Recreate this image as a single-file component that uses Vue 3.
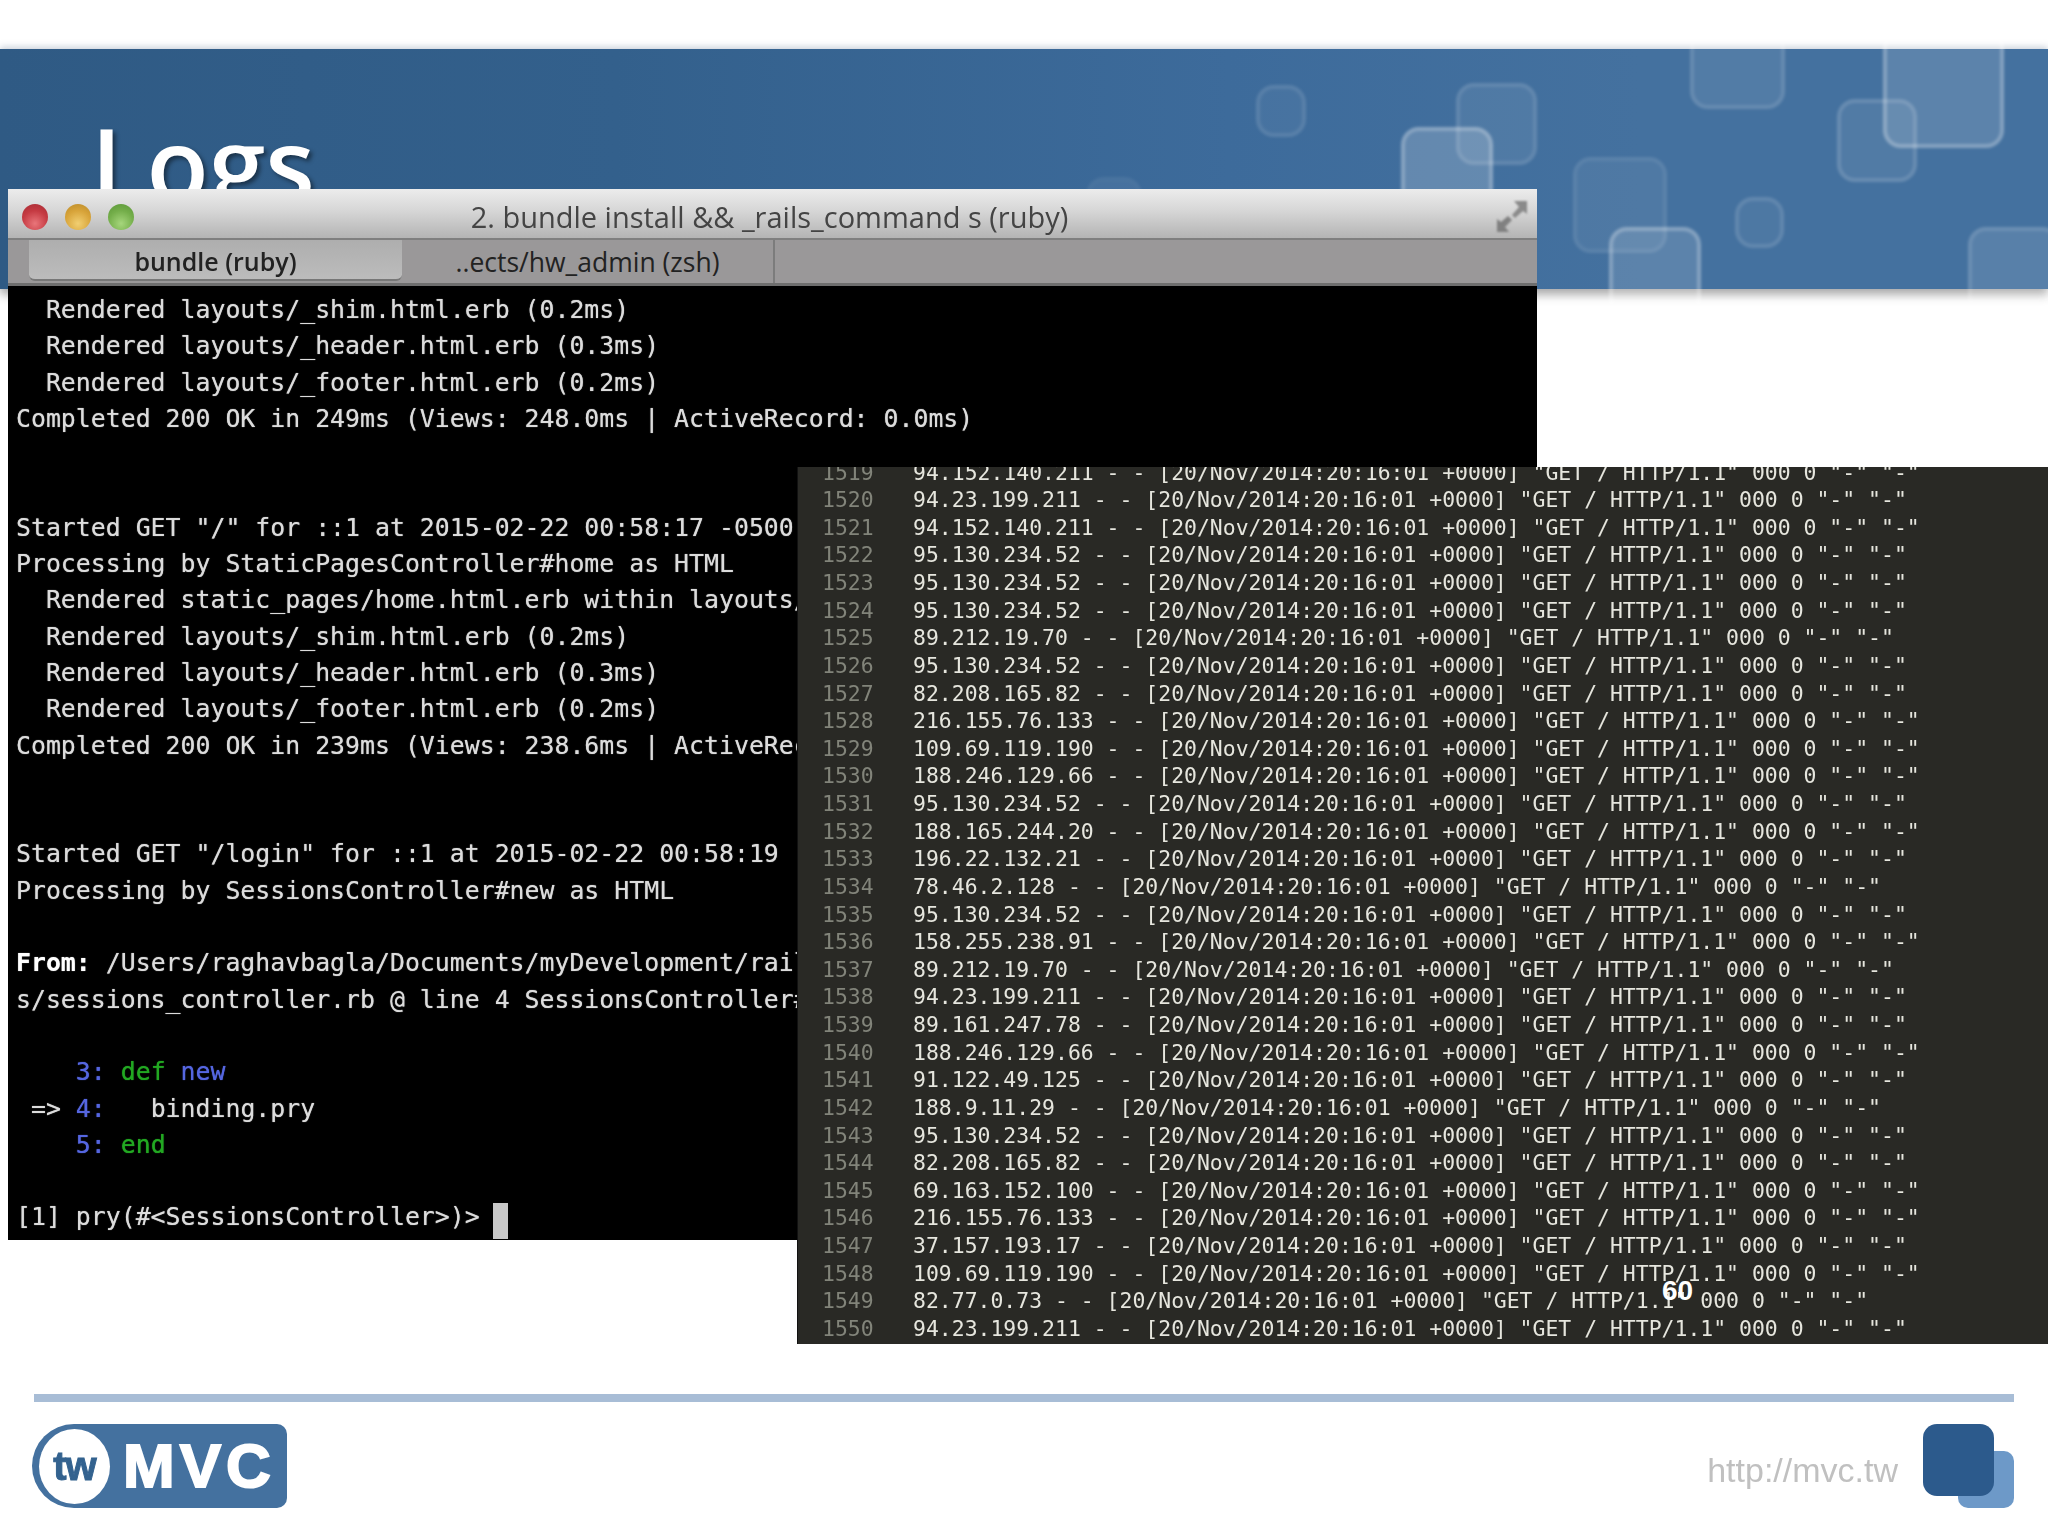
<script setup>
const squares = [
  { x: 1086, y: 177, w: 56, h: 56, a: 0.06, b: 0.02 },
  { x: 1256, y: 85, w: 50, h: 52, a: 0.05, b: 0.1 },
  { x: 1456, y: 83, w: 81, h: 82, a: 0.08, b: 0.11 },
  { x: 1401, y: 127, w: 92, h: 92, a: 0.19, b: 0.24 },
  { x: 1573, y: 157, w: 94, h: 96, a: 0.06, b: 0.08 },
  { x: 1609, y: 227, w: 92, h: 92, a: 0.13, b: 0.26 },
  { x: 1735, y: 197, w: 49, h: 51, a: 0.05, b: 0.12 },
  { x: 1690, y: 14, w: 95, h: 95, a: 0.08, b: 0.12 },
  { x: 1837, y: 99, w: 80, h: 83, a: 0.07, b: 0.14 },
  { x: 1883, y: 28, w: 121, h: 120, a: 0.13, b: 0.26 },
  { x: 1968, y: 227, w: 92, h: 92, a: 0.11, b: 0.12 }
]
const squareStyle = (s) => ({
  left: s.x + 'px',
  top: s.y - 49 + 'px',
  width: s.w + 'px',
  height: s.h + 'px',
  background: `rgba(255,255,255,${s.a})`,
  borderColor: `rgba(255,255,255,${s.b})`
})

const t = (text, c = '') => ({ text, c })
const terminal = [
  [t('  Rendered layouts/_shim.html.erb (0.2ms)')],
  [t('  Rendered layouts/_header.html.erb (0.3ms)')],
  [t('  Rendered layouts/_footer.html.erb (0.2ms)')],
  [t('Completed 200 OK in 249ms (Views: 248.0ms | ActiveRecord: 0.0ms)')],
  [],
  [],
  [t('Started GET "/" for ::1 at 2015-02-22 00:58:17 -0500')],
  [t('Processing by StaticPagesController#home as HTML')],
  [t('  Rendered static_pages/home.html.erb within layouts/application')],
  [t('  Rendered layouts/_shim.html.erb (0.2ms)')],
  [t('  Rendered layouts/_header.html.erb (0.3ms)')],
  [t('  Rendered layouts/_footer.html.erb (0.2ms)')],
  [t('Completed 200 OK in 239ms (Views: 238.6ms | ActiveRecord: 0.0ms)')],
  [],
  [],
  [t('Started GET "/login" for ::1 at 2015-02-22 00:58:19 -0500')],
  [t('Processing by SessionsController#new as HTML')],
  [],
  [t('From:', 'strong'), t(' /Users/raghavbagla/Documents/myDevelopment/rails_projects/hw_admin/app/controller')],
  [t('s/sessions_controller.rb @ line 4 SessionsController#new:')],
  [],
  [t('    '), t('3:', 'num'), t(' '), t('def', 'green'), t(' '), t('new', 'num')],
  [t(' => '), t('4:', 'num'), t('   binding.pry')],
  [t('    '), t('5:', 'num'), t(' '), t('end', 'green')],
  [],
  [t('[1] pry(#<SessionsController>)> '), t(' ', 'cursor')]
]

const ips = [
  '94.152.140.211', '94.23.199.211', '94.152.140.211', '95.130.234.52', '95.130.234.52',
  '95.130.234.52', '89.212.19.70', '95.130.234.52', '82.208.165.82', '216.155.76.133',
  '109.69.119.190', '188.246.129.66', '95.130.234.52', '188.165.244.20', '196.22.132.21',
  '78.46.2.128', '95.130.234.52', '158.255.238.91', '89.212.19.70', '94.23.199.211',
  '89.161.247.78', '188.246.129.66', '91.122.49.125', '188.9.11.29', '95.130.234.52',
  '82.208.165.82', '69.163.152.100', '216.155.76.133', '37.157.193.17', '109.69.119.190',
  '82.77.0.73', '94.23.199.211'
]
const logs = ips.map((ip, i) => ({
  n: 1519 + i,
  text: `${ip} - - [20/Nov/2014:20:16:01 +0000] "GET / HTTP/1.1" 000 0 "-" "-"`
}))
</script>

<template>
  <div class="slide">
    <header class="band">
      <span
        v-for="(s, i) in squares"
        :key="i"
        class="square"
        :style="squareStyle(s)"
      ></span>
      <h1 class="title">Logs</h1>
    </header>

    <section class="terminal">
      <div class="titlebar">
        <div class="lights">
          <i class="light red"></i>
          <i class="light yellow"></i>
          <i class="light green-light"></i>
        </div>
        <span class="win-title">2. bundle install &amp;&amp; _rails_command s (ruby)</span>
        <svg class="resize" width="32" height="33" viewBox="0 0 32 33">
          <path d="M18 1h13v13l-4-3-8 7-3-3 7-8z" fill="#8a8a8a" />
          <path d="M1 32V19l4 3 7-6 4 4-7 7 4 5z" fill="#808080" />
        </svg>
      </div>
      <div class="tabs">
        <div class="tab active">bundle (ruby)</div>
        <div class="tab idle">..ects/hw_admin (zsh)</div>
      </div>
      <div class="term-body">
        <div v-for="(line, i) in terminal" :key="i" class="term-line">
          <span v-for="(seg, j) in line" :key="j" :class="seg.c">{{ seg.text }}</span>
        </div>
      </div>
    </section>

    <section class="log">
      <div class="log-list">
        <div v-for="row in logs" :key="row.n" class="log-row">
          <span class="log-num">{{ row.n }}</span>
          <span class="log-text">{{ row.text }}</span>
        </div>
      </div>
    </section>

    <span class="page-no">60</span>

    <footer class="footer">
      <div class="rule"></div>
      <div class="footer-row">
        <div class="logo">
          <div class="logo-circle"><span>tw</span></div>
          <span class="logo-text">MVC</span>
        </div>
        <div class="footer-right">
          <span class="url">http://mvc.tw</span>
          <div class="mark"><span class="mark-back"></span><span class="mark-front"></span></div>
        </div>
      </div>
    </footer>
  </div>
</template>

<style scoped>
.slide {
  position: relative;
  width: 2048px;
  height: 1536px;
  overflow: hidden;
  background: #fff;
  display: flex;
  flex-direction: column;
}
.band {
  position: relative;
  flex: none;
  height: 240px;
  margin-top: 49px;
  background: linear-gradient(90deg, #2f5a84 0%, #33608c 30%, #3d6b9b 60%, #44719f 80%, #44719f 100%);
  box-shadow: 0 6px 9px rgba(60, 60, 60, 0.42), 0 -3px 6px rgba(120, 140, 170, 0.28);
  clip-path: inset(-12px 0 -24px 0);
}
.square {
  position: absolute;
  box-sizing: border-box;
  border: 4px solid;
  border-radius: 18px;
  filter: blur(1.6px);
}
.title {
  position: relative;
  margin: 0;
  padding: 49px 0 0 91px;
  font: 600 102px/130px "Open Sans", sans-serif;
  color: #fff;
  text-shadow: 3px 3px 4px rgba(0, 0, 0, 0.45);
}

.terminal {
  position: absolute;
  left: 8px;
  top: 189px;
  width: 1529px;
  height: 1051px;
  overflow: hidden;
  background: #000;
  display: flex;
  flex-direction: column;
}
.titlebar {
  position: relative;
  flex: none;
  height: 51px;
  box-sizing: border-box;
  border-bottom: 2px solid #7f7f7f;
  background: linear-gradient(180deg, #ececec 0%, #d6d6d6 45%, #b4b4b4 100%);
  display: flex;
  align-items: center;
  justify-content: center;
}
.lights {
  position: absolute;
  left: 14px;
  top: 15px;
  display: flex;
  gap: 17px;
}
.light {
  display: block;
  width: 26px;
  height: 26px;
  border-radius: 50%;
  filter: blur(0.5px);
}
.red { background: radial-gradient(circle at 50% 75%, #e9757a 0%, #c53a42 55%, #a52c34 100%); }
.yellow { background: radial-gradient(circle at 50% 75%, #f1cf72 0%, #d8a43a 55%, #b98a2a 100%); }
.green-light { background: radial-gradient(circle at 50% 75%, #a6d67c 0%, #74ae4a 55%, #5a9638 100%); }
.win-title {
  font: 400 29px/1 "Open Sans", sans-serif;
  color: #444;
  transform: translate(-3px, 3px);
  filter: blur(0.4px);
}
.resize {
  position: absolute;
  right: 9px;
  top: 11px;
  filter: blur(1px);
}
.tabs {
  flex: none;
  height: 46px;
  box-sizing: border-box;
  padding-left: 21px;
  border-bottom: 3px solid #6e6e6e;
  background: #9a9899;
  display: flex;
  font: 600 25px/42px "Open Sans", sans-serif;
  color: #222;
  text-align: center;
}
.tab {
  box-sizing: border-box;
  height: 43px;
}
.active {
  width: 373px;
  height: 41px;
  background: linear-gradient(180deg, #aeaeae, #bcbcbc);
  border-radius: 0 0 6px 6px;
  border-bottom: 2px solid #777;
  filter: blur(0.3px);
}
.idle {
  width: 373px;
  border-right: 2px solid #7c7c7c;
  font-weight: 400;
  font-size: 26.5px;
  line-height: 45px;
}
.term-body {
  flex: 1;
  padding: 6px 0 0 8px;
  font: 400 24.85px/36.3px "DejaVu Sans Mono", monospace;
  color: #dcdcdc;
  white-space: pre;
  text-shadow: 0 0 1px rgba(255, 255, 255, 0.7);
  filter: blur(0.5px);
}
.term-line {
  height: 36.3px;
}
.strong { color: #fff; font-weight: 700; }
.num { color: #5566e0; text-shadow: 0 0 1px #5566e0; }
.green { color: #22a822; text-shadow: 0 0 1px #22a822; }
.cursor {
  display: inline-block;
  width: 15px;
  height: 36px;
  margin-left: -2px;
  vertical-align: -4px;
  background: #c8c8c8;
}

.log {
  position: absolute;
  left: 797px;
  top: 467px;
  width: 1251px;
  height: 877px;
  overflow: hidden;
  background: #292925;
  border-left: 1px solid #111;
  box-sizing: border-box;
}
.log-list {
  margin-top: -8.4px;
  font: 400 21.44px/27.64px "DejaVu Sans Mono", monospace;
  filter: blur(0.3px);
}
.log-row {
  display: flex;
  height: 27.64px;
  padding-left: 24px;
  white-space: pre;
}
.log-num {
  flex: none;
  width: 91px;
  color: #82847a;
}
.log-text {
  color: #e6e6de;
}
.page-no {
  position: absolute;
  left: 1662px;
  top: 1275px;
  font: 700 28px/32px "Liberation Sans", sans-serif;
  color: #fff;
}

.footer {
  margin-top: auto;
  flex: none;
  height: 142px;
  box-sizing: border-box;
  padding: 0 34px;
  display: flex;
  flex-direction: column;
}
.rule {
  flex: none;
  height: 8px;
  background: #a8bdd6;
}
.footer-row {
  flex: 1;
  padding-top: 22px;
  display: flex;
  justify-content: space-between;
  align-items: flex-start;
}
.logo {
  position: relative;
  margin-left: -2px;
  width: 255px;
  height: 84px;
  border-radius: 42px 10px 10px 42px;
  background: #44719f;
  display: flex;
  align-items: center;
  color: #fff;
  filter: blur(0.5px);
}
.logo-circle {
  flex: none;
  width: 71px;
  height: 75px;
  margin-left: 7px;
  border-radius: 50%;
  background: #fff;
  color: #33628f;
  display: flex;
  align-items: center;
  justify-content: center;
  font: 700 40px/1 "Liberation Sans", sans-serif;
  letter-spacing: -1px;
  -webkit-text-stroke: 1px #33628f;
}
.logo-text {
  margin-left: 13px;
  font: 700 62px/1 "Liberation Sans", sans-serif;
  letter-spacing: 5px;
  -webkit-text-stroke: 2px #fff;
}
.footer-right {
  display: flex;
  align-items: flex-start;
}
.url {
  margin-top: 26px;
  font: 400 34px/40px "Liberation Sans", sans-serif;
  color: #c0c0c0;
  filter: blur(0.4px);
}
.mark {
  position: relative;
  margin-left: 25px;
  width: 91px;
  height: 84px;
}
.mark-back {
  position: absolute;
  right: 0;
  bottom: 0;
  width: 56px;
  height: 57px;
  border-radius: 10px;
  background: #6d99c8;
}
.mark-front {
  position: absolute;
  left: 0;
  top: 0;
  width: 71px;
  height: 72px;
  border-radius: 14px;
  background: #2c5a8c;
}
</style>
